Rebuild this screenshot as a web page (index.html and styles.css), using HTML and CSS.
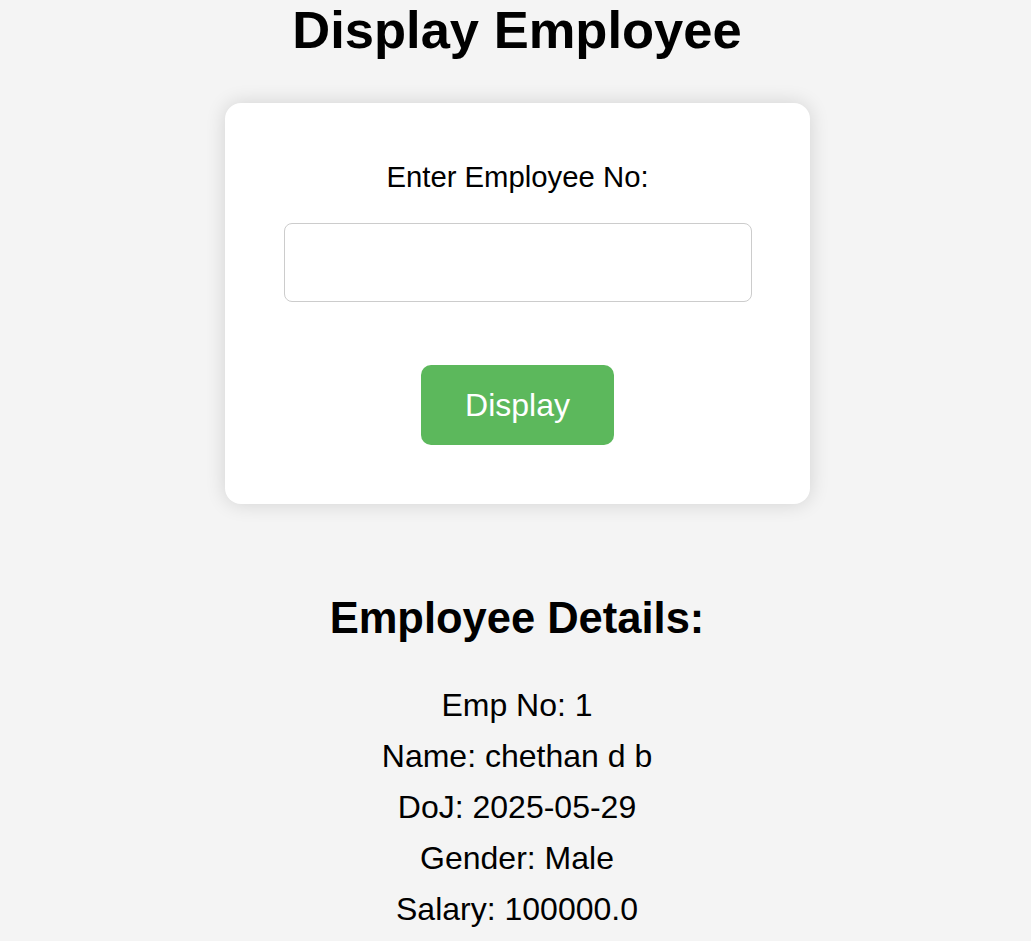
FILE: index.html
```html
<!DOCTYPE html>
<html lang="en">
<head>
<meta charset="utf-8">
<title>Display Employee</title>
<link rel="stylesheet" href="styles.css">
</head>
<body>
  <h1 class="title">Display Employee</h1>
  <form class="card">
    <label class="label" for="empno">Enter Employee No:</label>
    <input class="field" id="empno" type="text">
    <button class="btn" type="button">Display</button>
  </form>
  <section class="details">
    <h2 class="details-title">Employee Details:</h2>
    <p class="line">Emp No: 1</p>
    <p class="line">Name: chethan d b</p>
    <p class="line">DoJ: 2025-05-29</p>
    <p class="line">Gender: Male</p>
    <p class="line">Salary: 100000.0</p>
  </section>
</body>
</html>
```

FILE: styles.css
```css
html, body {
  margin: 0;
  padding: 0;
}
body {
  background: #f4f4f4;
  font-family: "Liberation Sans", Arial, sans-serif;
  color: #000;
  display: flex;
  flex-direction: column;
  align-items: center;
  padding-left: 3px;
}
.title {
  margin: 0;
  font-size: 52.5px;
  font-weight: bold;
  line-height: 60px;
}
.card {
  margin-top: 43px;
  width: 585px;
  box-sizing: border-box;
  background: #fff;
  border-radius: 16px;
  box-shadow: 0 0 20px rgba(0, 0, 0, 0.14);
  padding: 57px 58px 59px 59px;
  display: flex;
  flex-direction: column;
  align-items: center;
}
.label {
  font-size: 29.3px;
  line-height: 33px;
}
.field {
  margin-top: 30px;
  width: 468px;
  height: 79px;
  box-sizing: border-box;
  border: 1px solid #ccc;
  border-radius: 8px;
  background: #fff;
  font-size: 29px;
  padding: 0 16px;
  outline: none;
}
.btn {
  margin-top: 63px;
  width: 193px;
  height: 80px;
  border: none;
  border-radius: 10px;
  background: #5cb85c;
  color: #fff;
  font-family: "Liberation Sans", Arial, sans-serif;
  font-size: 32px;
  padding: 0;
}
.details {
  margin-top: 89px;
  display: flex;
  flex-direction: column;
  align-items: center;
}
.details-title {
  margin: 0 0 37px;
  font-size: 43.5px;
  font-weight: bold;
  line-height: 50px;
}
.line {
  margin: 0;
  font-size: 32px;
  line-height: 51px;
}
```
